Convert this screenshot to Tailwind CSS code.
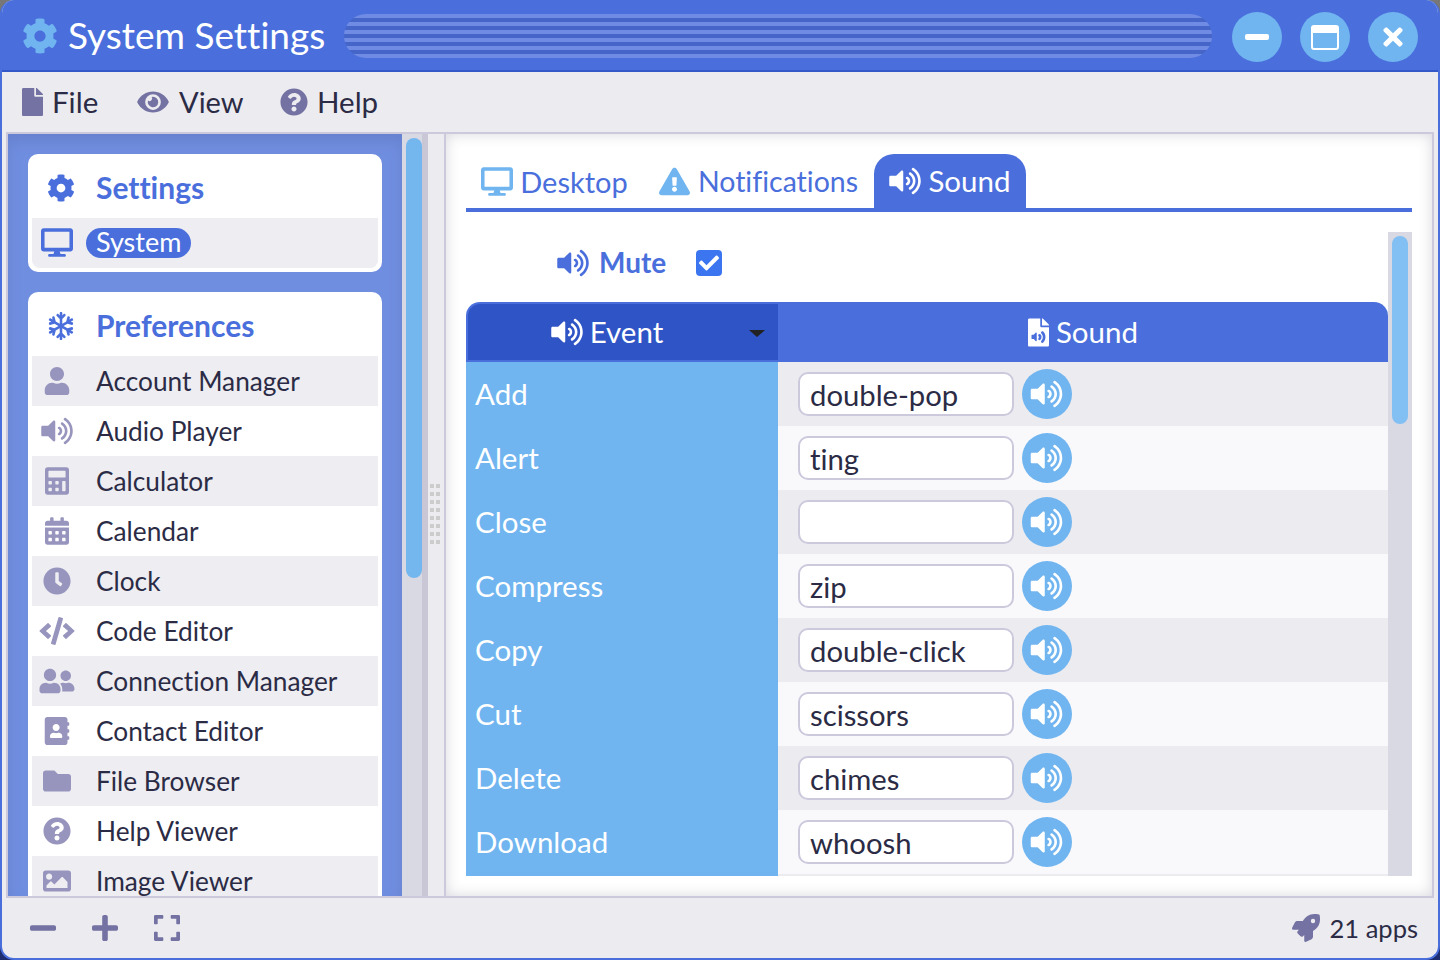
<!DOCTYPE html>
<html lang="en">
<head>
  <meta charset="UTF-8" />
  <title>System Settings</title>
  <script src="https://cdn.jsdelivr.net/npm/@tailwindcss/browser@4"></script>
</head>
<body class="w-[1440px] h-[960px] overflow-hidden bg-linear-to-b from-[#777777] to-[#1c2c6e] font-['Lato',sans-serif] [font-variant-ligatures:none] text-[#2b2b45]">

<!-- icon set -->
<svg class="hidden">
  <symbol id="i-cog" viewBox="0 0 512 512"><path d="M487.4 315.7l-42.6-24.6c4.3-23.2 4.3-47 0-70.2l42.6-24.6c4.9-2.8 7.1-8.6 5.5-14-11.1-35.6-30-67.8-54.7-94.6-3.8-4.1-10-5.1-14.8-2.3L380.8 110c-17.9-15.4-38.5-27.3-60.8-35.1V25.8c0-5.6-3.9-10.5-9.4-11.7-36.7-8.2-74.3-7.8-109.2 0-5.5 1.2-9.4 6.1-9.4 11.7V75c-22.2 7.9-42.8 19.8-60.8 35.1L88.7 85.5c-4.9-2.8-11-1.9-14.8 2.3-24.7 26.7-43.6 58.9-54.7 94.6-1.7 5.4.6 11.2 5.5 14L67.3 221c-4.3 23.2-4.3 47 0 70.2l-42.6 24.6c-4.9 2.8-7.1 8.6-5.5 14 11.1 35.6 30 67.8 54.7 94.6 3.8 4.1 10 5.1 14.8 2.3l42.6-24.6c17.9 15.4 38.5 27.3 60.8 35.1v49.2c0 5.6 3.9 10.5 9.4 11.7 36.7 8.2 74.3 7.8 109.2 0 5.5-1.2 9.4-6.1 9.4-11.7v-49.2c22.2-7.9 42.8-19.8 60.8-35.1l42.6 24.6c4.9 2.8 11 1.9 14.8-2.3 24.7-26.7 43.6-58.9 54.7-94.6 1.5-5.5-.7-11.3-5.6-14.1zM256 336c-44.1 0-80-35.9-80-80s35.9-80 80-80 80 35.9 80 80-35.9 80-80 80z"/></symbol>
  <symbol id="i-file" viewBox="0 0 384 512"><path d="M224 136V0H24C10.7 0 0 10.7 0 24v464c0 13.3 10.7 24 24 24h336c13.3 0 24-10.7 24-24V160H248c-13.2 0-24-10.8-24-24zm160-14.1v6.1H256V0h6.1c6.4 0 12.5 2.5 17 7l97.9 98c4.5 4.5 7 10.6 7 16.9z"/></symbol>
  <symbol id="i-eye" viewBox="0 0 576 512"><path d="M572.52 241.4C518.29 135.59 410.93 64 288 64S57.68 135.64 3.48 241.41a32.35 32.35 0 0 0 0 29.19C57.71 376.41 165.07 448 288 448s230.32-71.64 284.52-177.41a32.35 32.35 0 0 0 0-29.19zM288 400a144 144 0 1 1 144-144 143.93 143.93 0 0 1-144 144zm0-240a95.31 95.31 0 0 0-25.31 3.79 47.85 47.85 0 0 1-66.9 66.9A95.78 95.78 0 1 0 288 160z"/></symbol>
  <symbol id="i-help" viewBox="0 0 512 512"><path d="M504 256c0 136.997-111.043 248-248 248S8 392.997 8 256C8 119.083 119.043 8 256 8s248 111.083 248 248zM262.655 90c-54.497 0-89.255 22.957-116.549 63.758-3.536 5.286-2.353 12.415 2.715 16.258l34.699 26.31c5.205 3.947 12.621 3.008 16.665-2.122 17.864-22.658 30.113-35.797 57.303-35.797 20.429 0 45.698 13.148 45.698 32.958 0 14.976-12.363 22.667-32.534 33.976C247.128 238.528 216 254.941 216 296v4c0 6.627 5.373 12 12 12h56c6.627 0 12-5.373 12-12v-1.333c0-28.462 83.186-29.647 83.186-106.667 0-58.002-60.165-102-116.531-102zM256 338c-25.365 0-46 20.635-46 46 0 25.364 20.635 46 46 46s46-20.636 46-46c0-25.365-20.635-46-46-46z"/></symbol>
  <symbol id="i-desktop" viewBox="0 0 576 512"><path d="M528 0H48C21.5 0 0 21.5 0 48v320c0 26.5 21.5 48 48 48h192l-16 48h-72c-13.3 0-24 10.7-24 24s10.7 24 24 24h272c13.3 0 24-10.7 24-24s-10.7-24-24-24h-72l-16-48h192c26.5 0 48-21.5 48-48V48c0-26.5-21.5-48-48-48zm-16 352H64V64h448v288z"/></symbol>
  <symbol id="i-volume" viewBox="0 0 576 512"><path d="M215.03 71.05L126.06 160H24c-13.26 0-24 10.74-24 24v144c0 13.25 10.74 24 24 24h102.06l88.97 88.95c15.03 15.03 40.97 4.47 40.97-16.97V88.02c0-21.46-25.96-31.98-40.97-16.97zm233.32-51.08c-11.17-7.33-26.18-4.24-33.51 6.95-7.34 11.17-4.22 26.18 6.95 33.51 66.27 43.49 105.82 116.6 105.82 195.58 0 78.98-39.55 152.09-105.82 195.58-11.17 7.32-14.29 22.34-6.95 33.5 7.04 10.71 21.93 14.56 33.51 6.95C528.27 439.58 576 351.33 576 256S528.27 72.43 448.35 19.97zM480 256c0-63.53-32.06-121.94-85.77-156.24-11.19-7.14-26.03-3.82-33.12 7.46s-3.78 26.21 7.41 33.36C408.27 165.97 432 209.11 432 256s-23.73 90.03-63.48 115.42c-11.19 7.14-14.5 22.07-7.41 33.36 6.51 10.36 21.12 15.14 33.12 7.46C447.94 377.94 480 319.54 480 256zm-141.77-76.87c-11.58-6.33-26.19-2.16-32.61 9.45-6.39 11.61-2.16 26.2 9.45 32.61C327.98 228.28 336 241.63 336 256c0 14.38-8.02 27.72-20.92 34.81-11.61 6.41-15.84 21-9.45 32.61 6.43 11.66 21.05 15.8 32.61 9.45 28.23-15.55 45.77-45 45.77-76.88s-17.54-61.32-45.78-76.86z"/></symbol>
  <symbol id="i-warn" viewBox="0 0 576 512"><path d="M569.517 440.013C587.975 472.007 564.806 512 527.94 512H48.054c-36.937 0-59.999-40.055-41.577-71.987L246.423 23.985c18.467-32.009 64.72-31.951 83.154 0l239.94 416.028zM288 354c-25.405 0-46 20.595-46 46s20.595 46 46 46 46-20.595 46-46-20.595-46-46-46zm-43.673-165.346l7.418 136c.347 6.364 5.609 11.346 11.982 11.346h48.546c6.373 0 11.635-4.982 11.982-11.346l7.418-136c.375-6.874-5.098-12.654-11.982-12.654h-63.383c-6.884 0-12.356 5.78-11.981 12.654z"/></symbol>
  <symbol id="i-fileaudio" viewBox="0 0 384 512"><path d="M224 136V0H24C10.7 0 0 10.7 0 24v464c0 13.3 10.7 24 24 24h336c13.3 0 24-10.7 24-24V160H248c-13.2 0-24-10.8-24-24zm-64 268c0 10.7-12.9 16-20.5 8.5L104 376H76c-6.6 0-12-5.4-12-12v-56c0-6.6 5.4-12 12-12h28l35.5-36.5c7.6-7.6 20.5-2.2 20.5 8.5v136zm33.2-47.6c9.1-9.3 9.1-24.1 0-33.4-22.1-22.8 12.2-56.2 34.4-33.5 27.2 27.9 27.2 72.4 0 100.4-21.8 22.3-56.9-10.4-34.4-33.5zm86-117.1c54.4 55.9 54.4 144.8 0 200.8-21.8 22.4-57-10.3-34.4-33.5 36.2-37.2 36.3-96.5 0-133.8-22.1-22.8 12.3-56.3 34.4-33.5zM384 121.9v6.1H256V0h6.1c6.4 0 12.5 2.5 17 7l97.9 98c4.5 4.5 7 10.6 7 16.9z"/></symbol>
  <symbol id="i-snow" viewBox="0 0 448 512"><path d="M440.1 355.2l-39.2-23 34.1-9.3c8.4-2.3 13.4-11.1 11.1-19.6l-4.1-15.5c-2.2-8.5-10.9-13.6-19.3-11.3L343 298.2 271.2 256l71.9-42.2 79.7 21.7c8.4 2.3 17-2.8 19.3-11.3l4.1-15.5c2.2-8.5-2.7-17.3-11.1-19.6l-34.1-9.3 39.2-23c7.5-4.4 10.1-14.2 5.8-21.9l-7.9-13.9c-4.3-7.7-14-10.3-21.5-5.9l-39.2 23 9.1-34.7c2.2-8.5-2.7-17.3-11.1-19.6l-15.2-4.1c-8.4-2.3-17 2.8-19.3 11.3l-21.3 81-71.9 42.2v-84.5L306 70.4c6.1-6.2 6.1-16.4 0-22.6l-11.1-11.3c-6.1-6.2-16.1-6.2-22.2 0l-24.9 25.4V16c0-8.8-7-16-15.7-16h-15.7c-8.7 0-15.7 7.2-15.7 16v46.1l-24.9-25.4c-6.1-6.2-16.1-6.2-22.2 0L142.1 48c-6.1 6.2-6.1 16.4 0 22.6l58.3 59.3v84.5l-71.9-42.2-21.3-81c-2.2-8.5-10.9-13.6-19.3-11.3L73 84.1c-8.4 2.3-13.4 11.1-11.1 19.6l9.1 34.7-39.2-23c-7.5-4.4-17.1-1.8-21.5 5.9l-7.9 13.9c-4.3 7.7-1.8 17.5 5.8 21.9l39.2 23-34.1 9.1c-8.4 2.3-13.4 11.1-11.1 19.6L6 224.2c2.2 8.5 10.9 13.6 19.3 11.3l79.7-21.7 71.9 42.2-71.9 42.2-79.7-21.7c-8.4-2.3-17 2.8-19.3 11.3l-4.1 15.5c-2.2 8.5 2.7 17.3 11.1 19.6l34.1 9.3-39.2 23c-7.5 4.4-10.1 14.2-5.8 21.9L10 391c4.3 7.7 14 10.3 21.5 5.9l39.2-23-9.1 34.7c-2.2 8.5 2.7 17.3 11.1 19.6l15.2 4.1c8.4 2.3 17-2.8 19.3-11.3l21.3-81 71.9-42.2v84.5l-58.3 59.3c-6.1 6.2-6.1 16.4 0 22.6l11.1 11.3c6.1 6.2 16.1 6.2 22.2 0l24.9-25.4V496c0 8.8 7 16 15.7 16h15.7c8.7 0 15.7-7.2 15.7-16v-46.1l24.9 25.4c6.1 6.2 16.1 6.2 22.2 0l11.1-11.3c6.1-6.2 6.1-16.4 0-22.6l-58.3-59.3v-84.5l71.9 42.2 21.3 81c2.2 8.5 10.9 13.6 19.3 11.3l15.2-4.1c8.4-2.3 13.4-11.1 11.1-19.6l-9.1-34.7 39.2 23c7.5 4.4 17.1 1.8 21.5-5.9l7.9-13.9c4.3-7.7 1.8-17.5-5.8-21.9z"/></symbol>
  <symbol id="i-user" viewBox="0 0 448 512"><path d="M224 256c70.7 0 128-57.3 128-128S294.7 0 224 0 96 57.3 96 128s57.3 128 128 128zm89.6 32h-16.7c-22.2 10.2-46.9 16-72.9 16s-50.6-5.8-72.9-16h-16.7C60.2 288 0 348.2 0 422.4V464c0 26.5 21.5 48 48 48h352c26.5 0 48-21.5 48-48v-41.6c0-74.2-60.2-134.4-134.4-134.4z"/></symbol>
  <symbol id="i-calc" viewBox="0 0 448 512"><path d="M400 0H48C22.4 0 0 22.4 0 48v416c0 25.6 22.4 48 48 48h352c25.6 0 48-22.4 48-48V48c0-25.6-22.4-48-48-48zM128 435.2c0 6.4-6.4 12.8-12.8 12.8H76.8c-6.4 0-12.8-6.4-12.8-12.8v-38.4c0-6.4 6.4-12.8 12.8-12.8h38.4c6.4 0 12.8 6.4 12.8 12.8v38.4zm0-128c0 6.4-6.4 12.8-12.8 12.8H76.8c-6.4 0-12.8-6.4-12.8-12.8v-38.4c0-6.4 6.4-12.8 12.8-12.8h38.4c6.4 0 12.8 6.4 12.8 12.8v38.4zm128 128c0 6.4-6.4 12.8-12.8 12.8h-38.4c-6.4 0-12.8-6.4-12.8-12.8v-38.4c0-6.4 6.4-12.8 12.8-12.8h38.4c6.4 0 12.8 6.4 12.8 12.8v38.4zm0-128c0 6.4-6.4 12.8-12.8 12.8h-38.4c-6.4 0-12.8-6.4-12.8-12.8v-38.4c0-6.4 6.4-12.8 12.8-12.8h38.4c6.4 0 12.8 6.4 12.8 12.8v38.4zm128 128c0 6.4-6.4 12.8-12.8 12.8h-38.4c-6.4 0-12.8-6.4-12.8-12.8V268.8c0-6.4 6.4-12.8 12.8-12.8h38.4c6.4 0 12.8 6.4 12.8 12.8v166.4zm0-256c0 6.4-6.4 12.8-12.8 12.8H76.8c-6.4 0-12.8-6.4-12.8-12.8V76.8C64 70.4 70.4 64 76.8 64h294.4c6.4 0 12.8 6.4 12.8 12.8v102.4z"/></symbol>
  <symbol id="i-calendar" viewBox="0 0 448 512"><path d="M0 464c0 26.5 21.5 48 48 48h352c26.5 0 48-21.5 48-48V192H0v272zm320-196c0-6.6 5.4-12 12-12h40c6.6 0 12 5.4 12 12v40c0 6.6-5.4 12-12 12h-40c-6.6 0-12-5.4-12-12v-40zm0 128c0-6.6 5.4-12 12-12h40c6.6 0 12 5.4 12 12v40c0 6.6-5.4 12-12 12h-40c-6.6 0-12-5.4-12-12v-40zM192 268c0-6.6 5.4-12 12-12h40c6.6 0 12 5.4 12 12v40c0 6.6-5.4 12-12 12h-40c-6.6 0-12-5.4-12-12v-40zm0 128c0-6.6 5.4-12 12-12h40c6.6 0 12 5.4 12 12v40c0 6.6-5.4 12-12 12h-40c-6.6 0-12-5.4-12-12v-40zM64 268c0-6.6 5.4-12 12-12h40c6.6 0 12 5.4 12 12v40c0 6.6-5.4 12-12 12H76c-6.6 0-12-5.4-12-12v-40zm0 128c0-6.6 5.4-12 12-12h40c6.6 0 12 5.4 12 12v40c0 6.6-5.4 12-12 12H76c-6.6 0-12-5.4-12-12v-40zM400 64h-48V16c0-8.8-7.2-16-16-16h-32c-8.8 0-16 7.2-16 16v48H160V16c0-8.8-7.2-16-16-16h-32c-8.8 0-16 7.2-16 16v48H48C21.5 64 0 85.5 0 112v48h448v-48c0-26.5-21.5-48-48-48z"/></symbol>
  <symbol id="i-clock" viewBox="0 0 512 512"><path d="M256,8C119,8,8,119,8,256S119,504,256,504,504,393,504,256,393,8,256,8Zm92.49,313h0l-20,25a16,16,0,0,1-22.49,2.5h0l-67-49.72a40,40,0,0,1-15-31.23V112a16,16,0,0,1,16-16h32a16,16,0,0,1,16,16V256l58,42.5A16,16,0,0,1,348.49,321Z"/></symbol>
  <symbol id="i-code" viewBox="0 0 640 512"><path d="M278.9 511.5l-61-17.7c-6.4-1.8-10-8.5-8.2-14.9L346.2 8.7c1.8-6.4 8.5-10 14.9-8.2l61 17.7c6.4 1.8 10 8.5 8.2 14.9L293.8 503.3c-1.9 6.4-8.5 10.1-14.9 8.2zm-114-112.2l43.5-46.4c4.6-4.9 4.3-12.7-.8-17.2L117 256l90.6-79.7c5.1-4.5 5.5-12.3.8-17.2l-43.5-46.4c-4.5-4.8-12.1-5.1-17-.5L3.8 247.2c-5.1 4.7-5.1 12.8 0 17.5l144.1 135.1c4.9 4.6 12.5 4.4 17-.5zm327.2.6l144.1-135.1c5.1-4.7 5.1-12.8 0-17.5L492.1 112.1c-4.8-4.5-12.4-4.3-17 .5L431.6 159c-4.6 4.9-4.3 12.7.8 17.2L523 256l-90.6 79.7c-5.1 4.5-5.5 12.3-.8 17.2l43.5 46.4c4.5 4.9 12.1 5.1 17 .6z"/></symbol>
  <symbol id="i-friends" viewBox="0 0 640 512"><path d="M192 256c61.9 0 112-50.1 112-112S253.9 32 192 32 80 82.1 80 144s50.1 112 112 112zm76.8 32h-8.3c-20.8 10-43.9 16-68.5 16s-47.6-6-68.5-16h-8.3C51.6 288 0 339.6 0 403.2V432c0 26.5 21.5 48 48 48h288c26.5 0 48-21.5 48-48v-28.8c0-63.6-51.6-115.2-115.2-115.2zM480 256c53 0 96-43 96-96s-43-96-96-96-96 43-96 96 43 96 96 96zm48 32h-3.8c-13.9 4.8-28.6 8-44.2 8s-30.3-3.2-44.2-8H432c-20.4 0-39.2 5.9-55.7 15.4 24.4 26.3 39.7 61.2 39.7 99.8v38.4c0 2.2-.5 4.3-.6 6.4H592c26.5 0 48-21.5 48-48 0-61.9-50.1-112-112-112z"/></symbol>
  <symbol id="i-book" viewBox="0 0 448 512"><path d="M436 160c6.6 0 12-5.4 12-12v-40c0-6.6-5.4-12-12-12h-20V48c0-26.5-21.5-48-48-48H48C21.5 0 0 21.5 0 48v416c0 26.5 21.5 48 48 48h320c26.5 0 48-21.5 48-48v-48h20c6.6 0 12-5.4 12-12v-40c0-6.6-5.4-12-12-12h-20v-64h20c6.6 0 12-5.4 12-12v-40c0-6.6-5.4-12-12-12h-20v-64h20zm-228-32c35.3 0 64 28.7 64 64s-28.7 64-64 64-64-28.7-64-64 28.7-64 64-64zm112 236.8c0 10.6-10 19.2-22.4 19.2H118.4C106 384 96 375.4 96 364.8v-19.2c0-31.8 30.1-57.6 67.2-57.6h5c12.3 5.1 25.7 8 39.8 8s27.6-2.9 39.8-8h5c37.1 0 67.2 25.8 67.2 57.6v19.2z"/></symbol>
  <symbol id="i-folder" viewBox="0 0 512 512"><path d="M464 128H272l-64-64H48C21.49 64 0 85.49 0 112v288c0 26.51 21.49 48 48 48h416c26.51 0 48-21.49 48-48V176c0-26.51-21.49-48-48-48z"/></symbol>
  <symbol id="i-image" viewBox="0 0 512 512"><path d="M464 448H48c-26.51 0-48-21.49-48-48V112c0-26.51 21.49-48 48-48h416c26.51 0 48 21.49 48 48v288c0 26.51-21.49 48-48 48zM112 120c-30.928 0-56 25.072-56 56s25.072 56 56 56 56-25.072 56-56-25.072-56-56-56zM64 384h384V272l-87.515-87.515c-4.686-4.686-12.284-4.686-16.971 0L208 320l-55.515-55.515c-4.686-4.686-12.284-4.686-16.971 0L64 336v48z"/></symbol>
  <symbol id="i-minus" viewBox="0 0 448 512"><path d="M416 208H32c-17.67 0-32 14.33-32 32v32c0 17.67 14.33 32 32 32h384c17.67 0 32-14.33 32-32v-32c0-17.67-14.33-32-32-32z"/></symbol>
  <symbol id="i-plus" viewBox="0 0 448 512"><path d="M416 208H272V64c0-17.67-14.33-32-32-32h-32c-17.67 0-32 14.33-32 32v144H32c-17.67 0-32 14.33-32 32v32c0 17.67 14.33 32 32 32h144v144c0 17.67 14.33 32 32 32h32c17.67 0 32-14.33 32-32V304h144c17.67 0 32-14.33 32-32v-32c0-17.67-14.33-32-32-32z"/></symbol>
  <symbol id="i-expand" viewBox="0 0 448 512"><path d="M0 180V56c0-13.3 10.7-24 24-24h124c6.6 0 12 5.4 12 12v40c0 6.6-5.4 12-12 12H64v84c0 6.6-5.4 12-12 12H12c-6.6 0-12-5.4-12-12zM288 44v40c0 6.6 5.4 12 12 12h84v84c0 6.6 5.4 12 12 12h40c6.6 0 12-5.4 12-12V56c0-13.3-10.7-24-24-24H300c-6.6 0-12 5.4-12 12zm148 276h-40c-6.6 0-12 5.4-12 12v84h-84c-6.6 0-12 5.4-12 12v40c0 6.6 5.4 12 12 12h124c13.3 0 24-10.7 24-24V332c0-6.6-5.4-12-12-12zM160 468v-40c0-6.6-5.4-12-12-12H64v-84c0-6.6-5.4-12-12-12H12c-6.6 0-12 5.4-12 12v124c0 13.3 10.7 24 24 24h124c6.6 0 12-5.4 12-12z"/></symbol>
  <symbol id="i-rocket" viewBox="0 0 512 512"><path d="M505.12019,19.09375c-1.18945-5.53125-6.65819-11-12.207-12.1875C460.716,0,435.507,0,410.40747,0,307.17523,0,245.26909,55.20312,199.05238,128H94.83772c-16.34763.01562-35.55658,11.875-42.88664,26.48438L2.51562,253.29688A28.4,28.4,0,0,0,0,264a24.00867,24.00867,0,0,0,24.00582,24H127.81618l-22.47457,22.46875c-11.36521,11.36133-12.99607,32.25781,0,45.25L156.24582,406.625c11.15623,11.1875,32.15619,13.15625,45.27726,0l22.47457-22.46875V488a24.00867,24.00867,0,0,0,24.00581,24,28.55934,28.55934,0,0,0,10.707-2.51562l98.72834-49.39063c14.62888-7.29687,26.50776-26.5,26.50776-42.85937V312.79688c72.59753-46.3125,128.03493-108.40626,128.03493-211.09376C512.07526,76.5,512.07526,51.29688,505.12019,19.09375ZM384.04033,168A40,40,0,1,1,424.05,128,40.02322,40.02322,0,0,1,384.04033,168Z"/></symbol>
  <symbol id="i-close" viewBox="0 0 352 512"><path d="M242.72 256l100.07-100.07c12.28-12.28 12.28-32.19 0-44.48l-22.24-22.24c-12.28-12.28-32.19-12.28-44.48 0L176 189.28 75.93 89.21c-12.28-12.28-32.19-12.28-44.48 0L9.21 111.45c-12.28 12.28-12.28 32.19 0 44.48L109.28 256 9.21 356.07c-12.28 12.28-12.28 32.19 0 44.48l22.24 22.24c12.28 12.28 32.2 12.28 44.48 0L176 322.72l100.07 100.07c12.28 12.28 32.2 12.28 44.48 0l22.24-22.24c12.28-12.28 12.28-32.19 0-44.48L242.72 256z"/></symbol>
  <symbol id="i-check" viewBox="0 0 512 512"><path d="M173.898 439.404l-166.4-166.4c-9.997-9.997-9.997-26.206 0-36.204l36.203-36.204c9.997-9.998 26.206-9.998 36.204 0L192 312.69 432.095 72.596c9.997-9.997 26.206-9.997 36.204 0l36.203 36.204c9.997 9.997 9.997 26.206 0 36.204l-294.4 294.401c-9.998 9.997-26.207 9.997-36.204-.001z"/></symbol>
</svg>

<div class="w-[1440px] h-[960px] flex flex-col bg-[#ebebf0] rounded-t-[14px] rounded-b-[14px] border-2 border-t-0 border-[#4a6fdc] overflow-hidden">

  <!-- title bar -->
  <header class="h-[72px] shrink-0 -mx-[2px] pt-[2px] flex items-center bg-[#4a6fdc] border-b-2 border-[#3558c8]">
    <svg class="w-[36px] h-[36px] ml-[22px] fill-[#70b5f0]"><use href="#i-cog"/></svg>
    <h1 class="ml-[10px] -mt-[3px] w-[276px] text-[37px] leading-none whitespace-nowrap text-white">System Settings</h1>
    <div class="w-[868px] h-[44px] rounded-full bg-[repeating-linear-gradient(180deg,#6f8be3_0,#6f8be3_4px,#4565c9_4px,#4565c9_8px)]"></div>
    <button class="ml-[20px] mt-[2px] w-[50px] h-[50px] rounded-full bg-[#70b5f0] flex items-center justify-center"><span class="block w-[24px] h-[6px] rounded-[2px] bg-white"></span></button>
    <button class="ml-[18px] mt-[2px] w-[50px] h-[50px] rounded-full bg-[#70b5f0] flex items-center justify-center"><span class="block w-[28px] h-[25px] rounded-[3px] border-2 border-t-[8px] border-white"></span></button>
    <button class="ml-[18px] mt-[2px] w-[50px] h-[50px] rounded-full bg-[#70b5f0] flex items-center justify-center"><svg class="w-[20px] h-[28px] fill-white"><use href="#i-close"/></svg></button>
  </header>

  <!-- menu bar -->
  <nav class="h-[60px] shrink-0 flex items-center text-[29.5px] text-[#2b2b45]">
    <svg class="w-[21px] h-[28px] ml-[20px] fill-[#7472a2]"><use href="#i-file"/></svg>
    <span class="ml-[9px] w-[85px]">File</span>
    <svg class="w-[32px] h-[28px] fill-[#7472a2]"><use href="#i-eye"/></svg>
    <span class="ml-[10px] w-[101px] text-[29px]">View</span>
    <svg class="w-[28px] h-[28px] fill-[#7472a2]"><use href="#i-help"/></svg>
    <span class="ml-[9px]">Help</span>
  </nav>

  <!-- main -->
  <main class="flex-1 min-h-0 mx-[4px] flex border-2 border-[#ccc9dd]">
    <!-- sidebar -->
    <aside class="w-[394px] shrink-0 bg-[#708ee0] shadow-[inset_0_8px_14px_rgba(60,70,130,0.18)] pt-[20px] pl-[20px] overflow-hidden">
      <div class="w-[354px] p-[4px] bg-white rounded-[10px]">
        <div class="h-[60px] flex items-center">
          <span class="w-[58px] flex justify-center"><svg class="w-[28px] h-[28px] fill-[#4a6fdc]"><use href="#i-cog"/></svg></span>
          <span class="ml-[6px] -mt-[2px] text-[30px] font-bold text-[#4a6fdc]">Settings</span>
        </div>
        <div class="h-[50px] flex items-center bg-[#ededf2] rounded-b-[8px]">
          <svg class="w-[32px] h-[29px] -mt-[2px] ml-[9px] fill-[#4a6fdc]"><use href="#i-desktop"/></svg>
          <span class="ml-[13px] h-[30px] px-[10px] rounded-full bg-[#4a6fdc] text-white text-[27px] leading-[28px]">System</span>
        </div>
      </div>
      <div class="w-[354px] mt-[20px] p-[4px] pb-0 bg-white rounded-t-[10px]">
        <div class="h-[60px] flex items-center">
          <span class="w-[58px] flex justify-center"><svg class="w-[26px] h-[28px] fill-[#4a6fdc]"><use href="#i-snow"/></svg></span>
          <span class="ml-[6px] -mt-[2px] text-[30px] font-bold text-[#4a6fdc]">Preferences</span>
        </div>
        <div id="apps"></div>
      </div>
    </aside>

    <!-- sidebar scrollbar -->
    <div class="w-[26px] shrink-0 flex bg-[#d9d9e3] shadow-[inset_-6px_0_0_#c9c7d6] pl-[4px] pt-[4px] pr-[6px]">
      <div class="w-[16px] h-[440px] rounded-full bg-[#74b7ef]"></div>
    </div>

    <!-- splitter -->
    <div class="w-[18px] shrink-0 border-r-2 border-[#ccc9dd] pl-[2px] pb-[2px] flex flex-col justify-center">
      <div class="grid grid-cols-2 w-[10px] gap-x-[2px] gap-y-[4px]">
        <i class="h-[4px] bg-[#cccccc]"></i><i class="h-[4px] bg-[#cccccc]"></i><i class="h-[4px] bg-[#cccccc]"></i><i class="h-[4px] bg-[#cccccc]"></i>
        <i class="h-[4px] bg-[#cccccc]"></i><i class="h-[4px] bg-[#cccccc]"></i><i class="h-[4px] bg-[#cccccc]"></i><i class="h-[4px] bg-[#cccccc]"></i>
        <i class="h-[4px] bg-[#cccccc]"></i><i class="h-[4px] bg-[#cccccc]"></i><i class="h-[4px] bg-[#cccccc]"></i><i class="h-[4px] bg-[#cccccc]"></i>
        <i class="h-[4px] bg-[#cccccc]"></i><i class="h-[4px] bg-[#cccccc]"></i><i class="h-[4px] bg-[#cccccc]"></i><i class="h-[4px] bg-[#cccccc]"></i>
      </div>
    </div>

    <!-- right panel -->
    <section class="flex-1 min-w-0 flex flex-col bg-white shadow-[inset_0_0_14px_rgba(60,60,90,0.2)] p-[20px]">
      <div class="h-[58px] shrink-0 flex border-b-4 border-[#4a6fdc]">
        <div class="w-[177px] pt-[1px] flex items-center justify-center text-[29px] text-[#4a6fdc]">
          <svg class="w-[32px] h-[29px] -mt-[1px] fill-[#70b5f0]"><use href="#i-desktop"/></svg>
          <span class="ml-[7px]">Desktop</span>
        </div>
        <div class="w-[231px] pt-[1px] flex items-center justify-center text-[28.5px] text-[#4a6fdc]">
          <svg class="w-[31px] h-[29px] -mt-[1px] fill-[#70b5f0]"><use href="#i-warn"/></svg>
          <span class="ml-[8px]">Notifications</span>
        </div>
        <div class="w-[152px] pt-[1px] flex items-center justify-center bg-[#4a6fdc] text-[29.5px] text-white rounded-t-[20px]">
          <svg class="w-[32px] h-[28px] -mt-[1px] fill-white"><use href="#i-volume"/></svg>
          <span class="ml-[7px]">Sound</span>
        </div>
      </div>

      <div class="flex-1 min-h-0 mt-[20px] flex">
        <div class="flex-1 min-w-0">
          <div class="h-[70px] pb-[8px] flex items-center pl-[91px]">
            <svg class="w-[32px] h-[28px] -mt-[1px] fill-[#4a6fdc]"><use href="#i-volume"/></svg>
            <span class="ml-[10px] -mt-[2px] w-[97px] text-[28px] font-bold text-[#4a6fdc]">Mute</span>
            <span class="w-[26px] h-[26px] rounded-[4px] bg-[#3b76f0] flex items-center justify-center"><svg class="w-[20px] h-[20px] fill-white"><use href="#i-check"/></svg></span>
          </div>

          <!-- table head -->
          <div class="flex h-[60px] text-[29.5px] text-white">
            <div class="relative w-[312px] flex items-center justify-center pr-[32px] bg-[#2f54c6] border-2 border-r-0 border-[#4a6fdc] rounded-tl-[14px]">
              <svg class="w-[32px] h-[28px] fill-white"><use href="#i-volume"/></svg>
              <span class="ml-[7px]">Event</span>
              <span class="absolute right-[13px] top-[26px] border-x-[8px] border-x-transparent border-t-[7px] border-t-[#222222]"></span>
            </div>
            <div class="flex-1 flex items-center justify-center bg-[#4a6fdc] rounded-tr-[14px]">
              <svg class="w-[21px] h-[29px] fill-white"><use href="#i-fileaudio"/></svg>
              <span class="ml-[7px]">Sound</span>
            </div>
          </div>
          <div id="rows"></div>
          <div class="flex h-[2px] bg-[#ebebf0]"><div class="w-[312px] bg-[#70b5f0]"></div></div>
        </div>

        <!-- table scrollbar -->
        <div class="w-[24px] shrink-0 bg-[#d9d9e3] p-[4px]">
          <div class="h-[188px] rounded-full bg-[#82bff3]"></div>
        </div>
      </div>
    </section>
  </main>

  <!-- status bar -->
  <footer class="h-[60px] shrink-0 flex items-center text-[25.5px] text-[#2b2b45]">
    <svg class="w-[26px] h-[30px] ml-[28px] fill-[#7472a2]"><use href="#i-minus"/></svg>
    <svg class="w-[26px] h-[30px] ml-[36px] fill-[#7472a2]"><use href="#i-plus"/></svg>
    <svg class="w-[26px] h-[30px] ml-[36px] fill-[#7472a2]"><use href="#i-expand"/></svg>
    <svg class="w-[28px] h-[28px] ml-auto fill-[#7472a2]"><use href="#i-rocket"/></svg>
    <span class="ml-[10px] mr-[20px]">21 apps</span>
  </footer>
</div>

<script>
const apps = [
  ["i-user", "Account Manager", "w-[26px]"],
  ["i-volume", "Audio Player", "w-[32px]"],
  ["i-calc", "Calculator", "w-[24px]"],
  ["i-calendar", "Calendar", "w-[24px]"],
  ["i-clock", "Clock", "w-[28px]"],
  ["i-code", "Code Editor", "w-[36px]"],
  ["i-friends", "Connection Manager", "w-[36px]"],
  ["i-book", "Contact Editor", "w-[26px]"],
  ["i-folder", "File Browser", "w-[28px]"],
  ["i-help", "Help Viewer", "w-[28px]"],
  ["i-image", "Image Viewer", "w-[28px]"],
];
document.getElementById("apps").innerHTML = apps.map((a, i) => `
  <div class="h-[50px] flex items-center ${i % 2 ? "bg-white" : "bg-[#ededf2]"}">
    <span class="w-[50px] flex justify-center"><svg class="${a[2]} h-[28px] fill-[#9795bd]"><use href="#${a[0]}"/></svg></span>
    <span class="ml-[14px] pt-[1px] text-[26.25px] text-[#2b2b45]">${a[1]}</span>
  </div>`).join("");

const sounds = [
  ["Add", "double-pop"], ["Alert", "ting"], ["Close", ""], ["Compress", "zip"],
  ["Copy", "double-click"], ["Cut", "scissors"], ["Delete", "chimes"], ["Download", "whoosh"],
];
document.getElementById("rows").innerHTML = sounds.map((s, i) => `
  <div class="flex h-[64px] text-[29.5px] ${i % 2 ? "bg-[#f9f9fc]" : "bg-[#ebebf0]"}">
    <div class="w-[312px] flex items-center pl-[9px] bg-[#70b5f0] text-white">${s[0]}</div>
    <div class="flex-1 flex items-center pl-[20px]">
      <input value="${s[1]}" class="w-[216px] h-[44px] px-[10px] rounded-[10px] border-2 border-[#ccc9dd] bg-white text-[#2b2b45] text-[29.25px] outline-none">
      <button class="ml-[8px] w-[50px] h-[50px] rounded-full bg-[#70b5f0] flex items-center justify-center pr-[2px]"><svg class="w-[33px] h-[28px] fill-white"><use href="#i-volume"/></svg></button>
    </div>
  </div>`).join("");
</script>
</body>
</html>
